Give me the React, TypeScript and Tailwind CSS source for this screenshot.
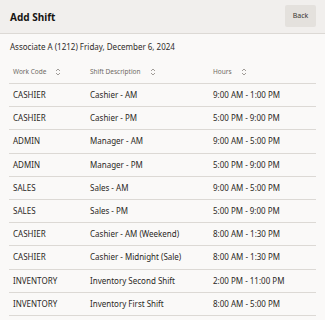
import React from "react";

const rows = [
  ["CASHIER", "Cashier - AM", "9:00 AM - 1:00 PM"],
  ["CASHIER", "Cashier - PM", "5:00 PM - 9:00 PM"],
  ["ADMIN", "Manager - AM", "9:00 AM - 5:00 PM"],
  ["ADMIN", "Manager - PM", "5:00 PM - 9:00 PM"],
  ["SALES", "Sales - AM", "9:00 AM - 5:00 PM"],
  ["SALES", "Sales - PM", "5:00 PM - 9:00 PM"],
  ["CASHIER", "Cashier - AM (Weekend)", "8:00 AM - 1:30 PM"],
  ["CASHIER", "Cashier - Midnight (Sale)", "8:00 AM - 1:30 PM"],
  ["INVENTORY", "Inventory Second Shift", "2:00 PM - 11:00 PM"],
  ["INVENTORY", "Inventory First Shift", "8:00 AM - 5:00 PM"],
];

const SortIcon = () => (
  <svg width="6" height="8" viewBox="0 0 6 8" fill="none" stroke="#8a8580" strokeWidth="0.8">
    <path d="M1 3 L3 1 L5 3" />
    <path d="M1 5 L3 7 L5 5" />
  </svg>
);

const HeaderCell = ({ label }: { label: string }) => (
  <div className="flex flex-row items-center gap-[9px]">
    <span>{label}</span>
    <SortIcon />
  </div>
);

const App = () => {
  return (
    <div
      className="w-[325px] h-[320px] bg-[#faf9f8] text-[#161513] overflow-hidden"
      style={{ fontFamily: '"Noto Sans", "Open Sans", sans-serif' }}
    >
      <div className="h-[34px] bg-[#f1efed] border-b border-[#dcd9d5] flex flex-row items-center justify-between pl-[10px] pr-[9px]">
        <h1 className="text-[10px] font-bold leading-none">Add Shift</h1>
        <button className="w-[31px] h-[22px] rounded-[2px] bg-[#e4e1dd] text-[7px] text-[#3b3733] -mt-[1px]">
          Back
        </button>
      </div>
      <div className="px-[9px]">
        <div className="pt-[7px] h-[19px] text-[8px] leading-[12px] pl-[1px] text-[#2f2c29]">
          Associate A (1212) Friday, December 6, 2024
        </div>
        <div className="grid grid-cols-[77px_123px_1fr] h-[31px] pt-[7px] items-center pl-[4px] text-[6.5px] text-[#6f6a65] border-b border-[#dcd9d5]">
          <HeaderCell label="Work Code" />
          <HeaderCell label="Shift Description" />
          <HeaderCell label="Hours" />
        </div>
        {rows.map((r, i) => (
          <div
            key={i}
            className="grid grid-cols-[77px_123px_1fr] h-[23.2px] items-center pl-[4px] text-[8px] text-[#2b2825] border-b border-[#dcd9d5]"
          >
            <span>{r[0]}</span>
            <span>{r[1]}</span>
            <span>{r[2]}</span>
          </div>
        ))}
      </div>
    </div>
  );
};

export default App;
